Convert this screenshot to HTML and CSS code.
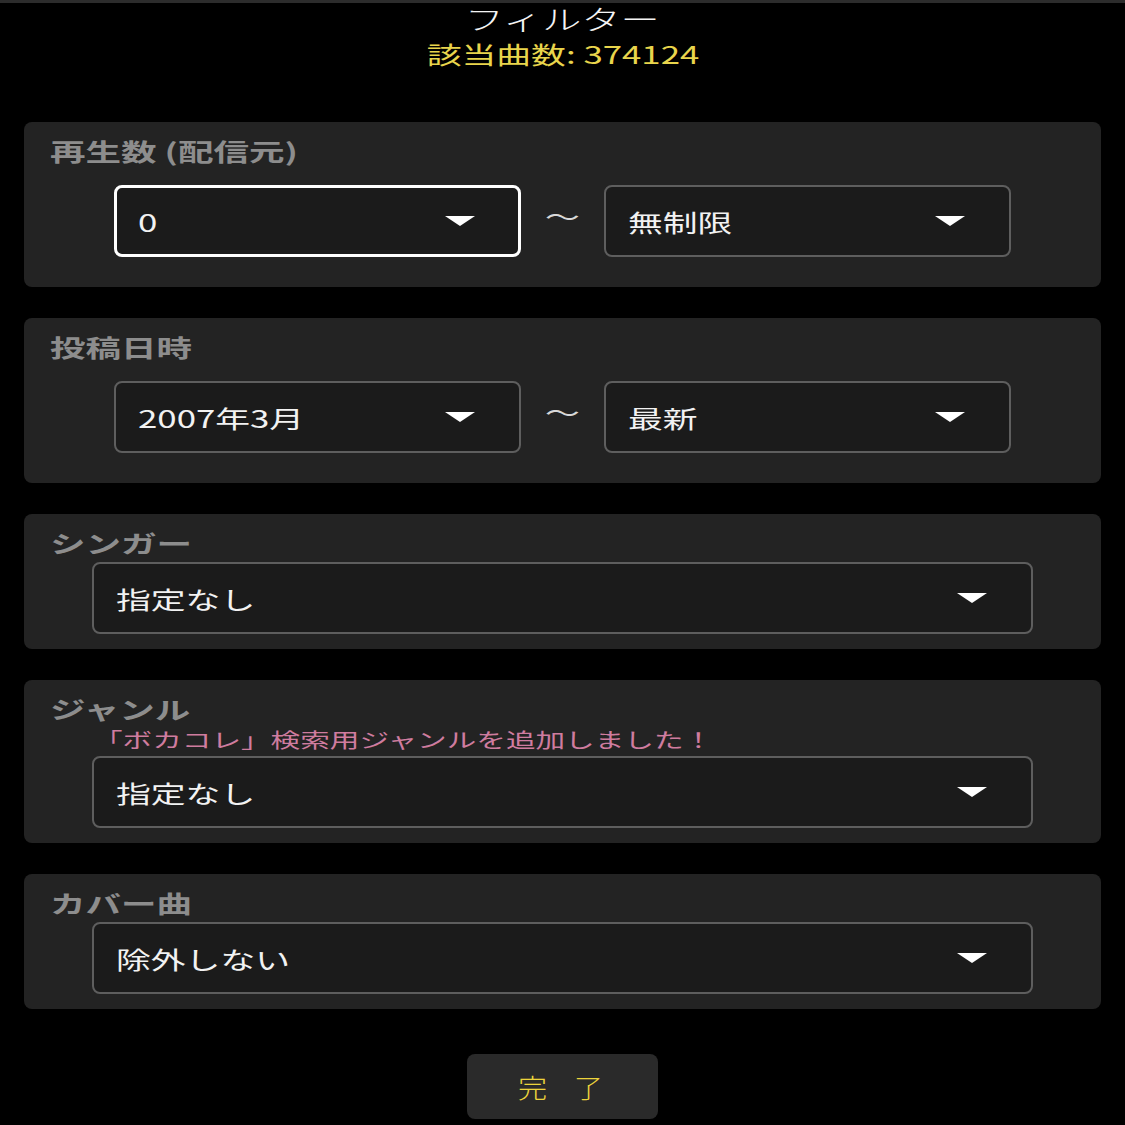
FILE: index.html
```html
<!DOCTYPE html>
<html lang="ja">

<head>
  <meta charset="UTF-8">
  <meta name="viewport" content="width=device-width, initial-scale=1.0">
  <link rel="stylesheet" href="styles.css">
  <title>フィルター</title>
</head>

<body>
  <div class="topbar"></div>
  <header class="head">
    <h1 class="title"><span class="t">フィルター</span></h1>
    <p class="count"><span class="t">該当曲数: 374124</span></p>
  </header>

  <main class="filters">
    <!-- play count -->
    <section class="card">
      <h2 class="label"><span class="t">再生数 (配信元)</span></h2>
      <div class="range">
        <div class="select focused">
          <span class="t">0</span>
          <svg class="caret" viewBox="0 0 30 10"><polygon points="0,0 30,0 15,10" /></svg>
        </div>
        <span class="tilde"><span class="t">〜</span></span>
        <div class="select">
          <span class="t">無制限</span>
          <svg class="caret" viewBox="0 0 30 10"><polygon points="0,0 30,0 15,10" /></svg>
        </div>
      </div>
    </section>

    <!-- post date -->
    <section class="card">
      <h2 class="label"><span class="t">投稿日時</span></h2>
      <div class="range">
        <div class="select">
          <span class="t">2007年3月</span>
          <svg class="caret" viewBox="0 0 30 10"><polygon points="0,0 30,0 15,10" /></svg>
        </div>
        <span class="tilde"><span class="t">〜</span></span>
        <div class="select">
          <span class="t">最新</span>
          <svg class="caret" viewBox="0 0 30 10"><polygon points="0,0 30,0 15,10" /></svg>
        </div>
      </div>
    </section>

    <section class="card">
      <h2 class="label"><span class="t">シンガー</span></h2>
      <div class="select wide">
        <span class="t">指定なし</span>
        <svg class="caret" viewBox="0 0 30 10"><polygon points="0,0 30,0 15,10" /></svg>
      </div>
    </section>

    <section class="card">
      <h2 class="label"><span class="t">ジャンル</span></h2>
      <p class="note"><span class="t">「ボカコレ」検索用ジャンルを追加しました！</span></p>
      <div class="select wide">
        <span class="t">指定なし</span>
        <svg class="caret" viewBox="0 0 30 10"><polygon points="0,0 30,0 15,10" /></svg>
      </div>
    </section>

    <section class="card">
      <h2 class="label"><span class="t">カバー曲</span></h2>
      <div class="select wide">
        <span class="t">除外しない</span>
        <svg class="caret" viewBox="0 0 30 10"><polygon points="0,0 30,0 15,10" /></svg>
      </div>
    </section>
  </main>

  <div class="actions">
    <button class="done"><span class="t">完了</span></button>
  </div>
</body>

</html>
```

FILE: styles.css
```css
body {
  margin: 0;
  background-color: #000;
  color: #fff;
  font-family: 'Noto Sans CJK JP', 'Noto Sans', sans-serif;
}

/* the screenshot text is stretched sideways */
.t {
  display: inline-block;
  transform: scaleX(1.45);
  transform-origin: left center;
  white-space: nowrap;
}

.topbar {
  height: 3px;
  background-color: #2c2c2c;
}

.head {
  text-align: center;
}

.head .t {
  transform-origin: center;
}

.title {
  margin: 1px 0 0;
  font-size: 27px;
  line-height: 30px;
  font-weight: 300;
  color: #f4f4f4;
}

.count {
  margin: 5px 0 0;
  font-size: 24px;
  line-height: 30px;
  color: #e9d54c;
}

.filters {
  display: flex;
  flex-direction: column;
  gap: 31px;
  margin: 53px 24px 0;
}

.card {
  background-color: #232323;
  border-radius: 8px;
  padding: 14px 26px 15px;
}

.label {
  margin: 0;
  font-size: 24px;
  line-height: 30px;
  font-weight: 700;
  color: #8d8d8d;
}

.label .t {
  transform: scaleX(1.48);
}

.range {
  display: flex;
  justify-content: center;
  align-items: center;
  gap: 24px;
  margin: 19px 0 15px;
}

.select {
  box-sizing: border-box;
  display: flex;
  align-items: center;
  justify-content: space-between;
  width: 407px;
  height: 72px;
  padding: 0 44px 0 22px;
  border: 2px solid #5e5e5e;
  border-radius: 8px;
  background-color: #1b1b1b;
  font-size: 24px;
  color: #f2f2f2;
}

.select.focused {
  border: 3px solid #fff;
  padding-left: 21px;
  padding-right: 43px;
}

.select.wide {
  width: auto;
  margin: 4px 42px 0;
}

.caret {
  width: 30px;
  height: 10px;
  fill: #fff;
}

.tilde {
  width: 35px;
  font-size: 24px;
  color: #d8d8d8;
  margin-top: -12px;
}

.note {
  margin: 4px 0 0 43px;
  font-size: 20px;
  line-height: 23px;
  color: #cf7c9f;
}

.note .t {
  transform: scaleX(1.48);
}

.note + .select.wide {
  margin-top: 5px;
}

.actions {
  display: flex;
  justify-content: center;
  margin-top: 45px;
}

.done {
  width: 191px;
  height: 65px;
  border: none;
  border-radius: 8px;
  background-color: #2a2a2a;
  font-family: 'Noto Sans CJK JP', sans-serif;
  font-size: 26px;
  font-weight: 300;
  letter-spacing: 24px;
  color: #ecd43c;
  padding: 0 0 0 24px;
}

.done .t {
  transform: scaleX(1.12);
  transform-origin: center;
}
```
